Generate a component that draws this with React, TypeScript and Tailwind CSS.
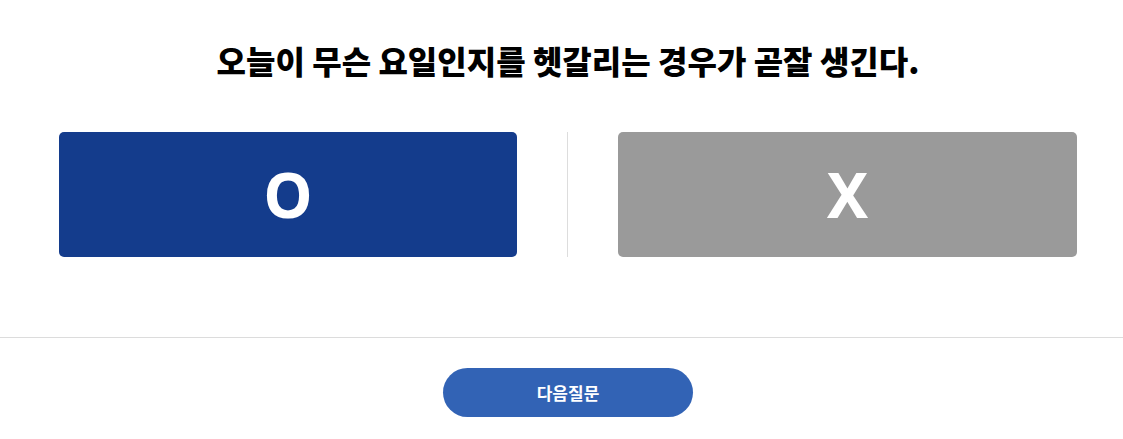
export default function App() {
  return (
    <div className="w-[1123px] h-[439px] bg-white" style={{ fontFamily: '"Noto Sans", "Noto Sans CJK KR", sans-serif' }}>
      <div className="border-b border-[#dcdcdc] h-[338px]">
        <div className="ml-[59px] w-[1018px] pt-[36px]">
          <h1 className="text-center text-[32px] leading-[48px] font-black text-black" style={{ fontFamily: '"Noto Sans CJK KR", sans-serif' }}>
            오늘이 무슨 요일인지를 헷갈리는 경우가 곧잘 생긴다.
          </h1>
          <div className="mt-[48px] flex items-stretch">
            <button className="w-[458px] h-[125px] rounded-[5px] bg-[#143c8c] text-white text-[62px] font-bold flex items-center justify-center">
              O
            </button>
            <div className="mx-[50px] w-px bg-[#dddddd]" />
            <button className="w-[459px] h-[125px] rounded-[5px] bg-[#9a9a9a] text-white text-[62px] font-bold flex items-center justify-center">
              X
            </button>
          </div>
        </div>
      </div>
      <div className="ml-[59px] w-[1018px] flex justify-center pt-[30px]">
        <button className="w-[250px] h-[49px] rounded-full bg-[#3263b5] text-white text-[17px] font-bold flex items-center justify-center" style={{ fontFamily: '"Noto Sans CJK KR", sans-serif' }}>
          다음질문
        </button>
      </div>
    </div>
  );
}
